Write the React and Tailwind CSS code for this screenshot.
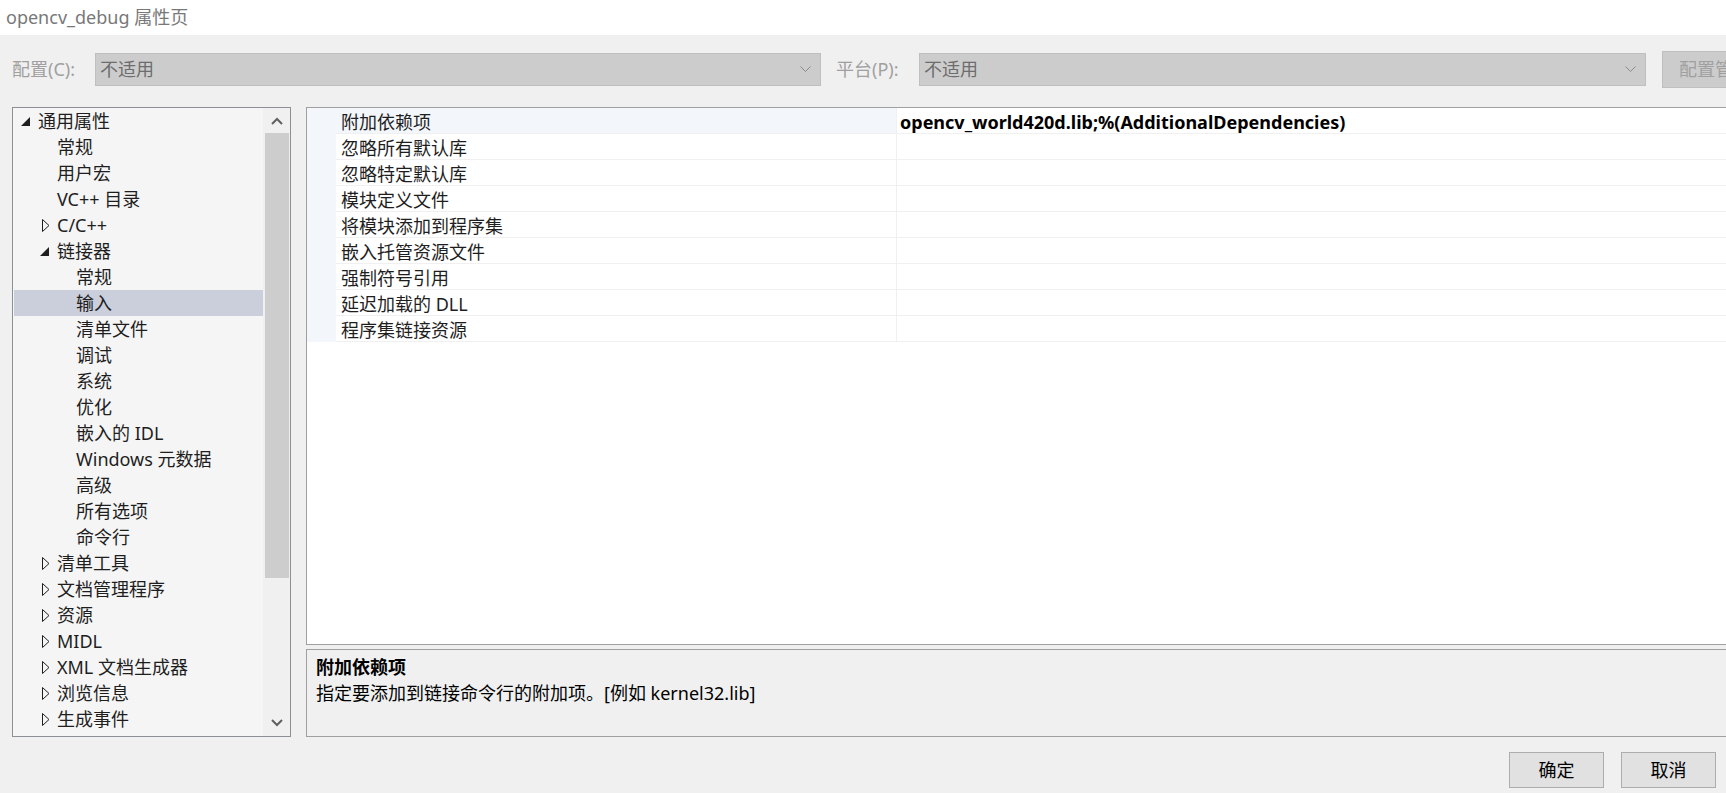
import React from "react";

const font = { fontFamily: '"Noto Sans", "Noto Sans CJK SC", sans-serif' };

const treeItems = [
  { level: 0, text: "通用属性", icon: "open" },
  { level: 1, text: "常规" },
  { level: 1, text: "用户宏" },
  { level: 1, text: "VC++ 目录" },
  { level: 1, text: "C/C++", icon: "closed" },
  { level: 1, text: "链接器", icon: "open" },
  { level: 2, text: "常规" },
  { level: 2, text: "输入", selected: true },
  { level: 2, text: "清单文件" },
  { level: 2, text: "调试" },
  { level: 2, text: "系统" },
  { level: 2, text: "优化" },
  { level: 2, text: "嵌入的 IDL" },
  { level: 2, text: "Windows 元数据" },
  { level: 2, text: "高级" },
  { level: 2, text: "所有选项" },
  { level: 2, text: "命令行" },
  { level: 1, text: "清单工具", icon: "closed" },
  { level: 1, text: "文档管理程序", icon: "closed" },
  { level: 1, text: "资源", icon: "closed" },
  { level: 1, text: "MIDL", icon: "closed" },
  { level: 1, text: "XML 文档生成器", icon: "closed" },
  { level: 1, text: "浏览信息", icon: "closed" },
  { level: 1, text: "生成事件", icon: "closed" },
];

const props = [
  "附加依赖项",
  "忽略所有默认库",
  "忽略特定默认库",
  "模块定义文件",
  "将模块添加到程序集",
  "嵌入托管资源文件",
  "强制符号引用",
  "延迟加载的 DLL",
  "程序集链接资源",
];

const padByLevel = ["pl-[5px]", "pl-[24px]", "pl-[43px]"];

const Chevron = ({ up }) => (
  <svg width="12" height="8" viewBox="0 0 12 8">
    <path
      d={up ? "M1 7 L6 2 L11 7" : "M1 1 L6 6 L11 1"}
      fill="none"
      stroke="#606060"
      strokeWidth="2"
    />
  </svg>
);

const ComboArrow = () => (
  <svg width="11" height="7" viewBox="0 0 11 7">
    <path d="M0.5 0.5 L5.5 5.5 L10.5 0.5" fill="none" stroke="#8a8a8a" strokeWidth="1" />
  </svg>
);

const TreeIcon = ({ type }) => {
  if (type === "open")
    return (
      <svg width="10" height="9" viewBox="0 0 10 9" className="ml-[2px]">
        <path d="M9 0 L9 9 L0 9 Z" fill="#1e1e1e" />
      </svg>
    );
  if (type === "closed")
    return (
      <svg width="8" height="13" viewBox="0 0 8 13" className="ml-[4px]">
        <path d="M0.5 0.5 L7 6.5 L0.5 12.5 Z" fill="none" stroke="#1e1e1e" strokeWidth="1" />
      </svg>
    );
  return null;
};

const Combo = ({ width }) => (
  <div
    className={`${width} shrink-0 h-[33px] bg-[#cccccc] border border-[#bfbfbf] flex items-center justify-between pl-[4px] pr-[9px] text-[18px] text-[#6d6d6d]`}
  >
    <span>不适用</span>
    <ComboArrow />
  </div>
);

export default function App() {
  return (
    <div
      className="w-[1726px] h-[793px] overflow-hidden bg-[#f0f0f0] flex flex-col text-[#1e1e1e]"
      style={font}
    >
      {/* title */}
      <div className="h-[35px] bg-white flex items-center pl-[6px] text-[18px] text-[#787878] shrink-0">
        opencv_debug 属性页
      </div>

      {/* config row */}
      <div className="mt-[16px] h-[37px] flex items-center pl-[12px] shrink-0 text-[18px]">
        <div className="w-[83px] shrink-0 text-[#a0a0a0]">配置(C):</div>
        <Combo width="w-[726px]" />
        <div className="ml-[15px] w-[83px] shrink-0 text-[#a0a0a0]">平台(P):</div>
        <Combo width="w-[727px]" />
        <div className="ml-[16px] w-[200px] shrink-0 h-[37px] bg-[#cccccc] border border-[#bfbfbf] flex items-center pl-[16px] text-[#a0a0a0] whitespace-nowrap">
          配置管理器(O)...
        </div>
      </div>

      {/* main */}
      <div className="mt-[19px] h-[630px] flex pl-[12px] shrink-0">
        {/* tree */}
        <div className="w-[279px] h-full border border-[#8c8f94] bg-[#f5f5f5] flex shrink-0">
          <div className="flex-1 pl-[1px] text-[18px] leading-[26px]">
            {treeItems.map((it, i) => (
              <div
                key={i}
                className={`h-[26px] flex items-center whitespace-nowrap ${padByLevel[it.level]} ${
                  it.selected ? "bg-[#cbcfdc]" : ""
                }`}
              >
                <div className="w-[19px] flex items-center">
                  <TreeIcon type={it.icon} />
                </div>
                <span>{it.text}</span>
              </div>
            ))}
          </div>
          <div className="w-[27px] h-full bg-[#f0f0f0] flex flex-col items-center">
            <div className="h-[25px] flex items-center justify-center">
              <Chevron up />
            </div>
            <div className="w-[24px] h-[445px] bg-[#cdcdcd]" />
            <div className="flex-1" />
            <div className="h-[26px] flex items-center justify-center">
              <Chevron />
            </div>
          </div>
        </div>

        {/* right column */}
        <div className="ml-[15px] w-[1440px] shrink-0 flex flex-col">
          <div className="h-[538px] border border-[#a0a0a0] bg-white">
            {props.map((p, i) => (
              <div key={i} className="h-[26px] flex text-[18px] leading-[25px]">
                <div className="w-[29px] bg-[#f3f6fb] shrink-0" />
                <div
                  className={`w-[561px] shrink-0 border-b border-r border-[#f0f0f0] pl-[5px] pt-[2px] ${
                    i === 0 ? "bg-[#f3f6fb]" : ""
                  }`}
                >
                  {p}
                </div>
                <div className="flex-1 border-b border-[#f0f0f0] pl-[3px] pt-[2px] font-bold text-black whitespace-nowrap">
                  {i === 0 ? "opencv_world420d.lib;%(AdditionalDependencies)" : ""}
                </div>
              </div>
            ))}
          </div>
          <div className="mt-[4px] h-[88px] border border-[#a0a0a0] bg-[#f0f0f0] pl-[9px] pt-[4px] text-[18px] leading-[26px] text-black">
            <div className="font-bold">附加依赖项</div>
            <div>指定要添加到链接命令行的附加项。[例如 kernel32.lib]</div>
          </div>
        </div>
      </div>

      {/* buttons */}
      <div className="mt-[15px] flex justify-end gap-[17px] pr-[10px] shrink-0">
        <button className="w-[95px] h-[36px] bg-[#e1e1e1] border border-[#adadad] text-[18px] text-black">
          确定
        </button>
        <button className="w-[95px] h-[36px] bg-[#e1e1e1] border border-[#adadad] text-[18px] text-black">
          取消
        </button>
      </div>
    </div>
  );
}
